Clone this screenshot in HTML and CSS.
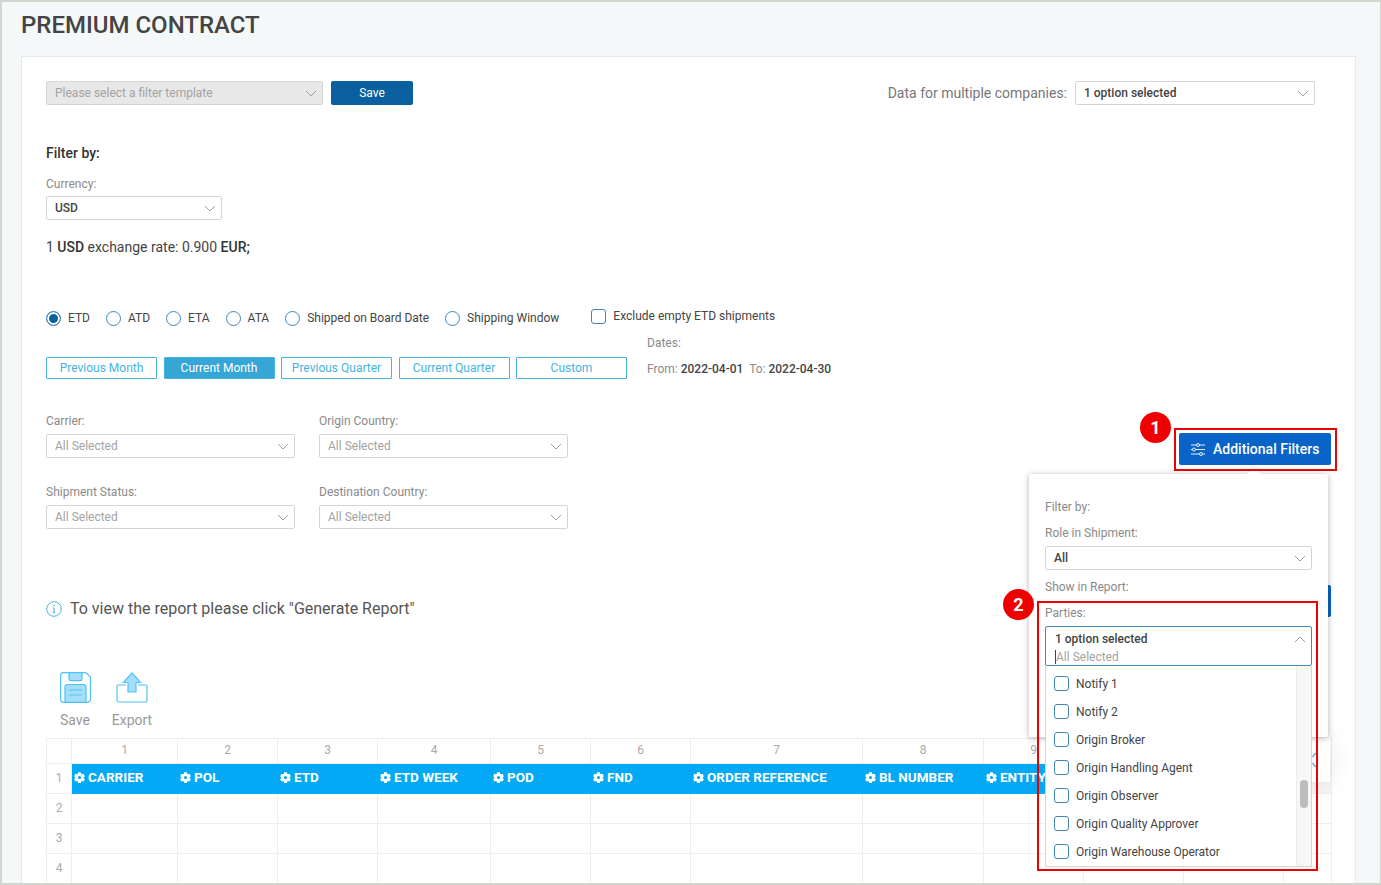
FILE: index.html
```html
<!DOCTYPE html>
<html lang="en">
<head>
    <meta charset="UTF-8">
    <meta name="viewport" content="width=device-width, initial-scale=1.0">
    <title>Premium Contract</title>
    <link rel="stylesheet" href="styles.css">
</head>
<body>
    <svg class="sprites" width="0" height="0">
        <symbol id="chev" viewBox="0 0 12 7"><path d="M1 1l5 5 5-5" fill="none" stroke="currentColor" stroke-width="1"/></symbol>
        <symbol id="cog" viewBox="0 0 24 24"><path fill-rule="evenodd" fill="currentColor" d="M9 .5h6l.7 3.500 1.700 1 3.400-1.200 3 5.200-2.700 2.300v2l2.700 2.300-3 5.200-3.400-1.200-1.700 1-.7 3.500H9l-.7-3.500-1.700-1-3.400 1.200-3-5.200 2.700-2.300v-2L.2 9l3-5.200L6.600 5l1.700-1zM12 8.500a3.500 3.500 0 1 0 0 7 3.500 3.500 0 0 0 0-7z"/></symbol>
    </svg>

    <div class="page">
        <h1>PREMIUM CONTRACT</h1>

        <div class="card">
            <div class="top-row">
                <div class="template-group">
                    <div class="select select-disabled template-select">Please select a filter template<svg class="chev"><use href="#chev"/></svg></div>
                    <button class="btn-save">Save</button>
                </div>
                <div class="company-group">
                    <span class="company-label">Data for multiple companies:</span>
                    <div class="select select-value company-select">1 option selected<svg class="chev"><use href="#chev"/></svg></div>
                </div>
            </div>

            <div class="filter-title">Filter by:</div>
            <label class="field-label">Currency:</label>
            <div class="select select-value currency-select">USD<svg class="chev"><use href="#chev"/></svg></div>
            <p class="rate">1 <b>USD</b> exchange rate: 0.900 <b>EUR;</b></p>

            <div class="date-types">
                <span class="radio-item"><i class="radio radio-on"></i>ETD</span>
                <span class="radio-item"><i class="radio"></i>ATD</span>
                <span class="radio-item"><i class="radio"></i>ETA</span>
                <span class="radio-item"><i class="radio"></i>ATA</span>
                <span class="radio-item"><i class="radio"></i>Shipped on Board Date</span>
                <span class="radio-item"><i class="radio"></i>Shipping Window</span>
                <span class="check-item"><i class="check"></i>Exclude empty ETD shipments</span>
            </div>

            <div class="range-row">
                <div class="range-btns">
                    <button class="range-btn">Previous Month</button>
                    <button class="range-btn active">Current Month</button>
                    <button class="range-btn">Previous Quarter</button>
                    <button class="range-btn">Current Quarter</button>
                    <button class="range-btn">Custom</button>
                </div>
                <div class="dates">
                    <div>Dates:</div>
                    <div class="dates-values">From: <b>2022-04-01</b>&nbsp; To: <b>2022-04-30</b></div>
                </div>
            </div>

            <div class="filters-row">
                <div class="filters-grid">
                    <div>
                        <label class="field-label">Carrier:</label>
                        <div class="select select-muted">All Selected<svg class="chev"><use href="#chev"/></svg></div>
                    </div>
                    <div>
                        <label class="field-label">Origin Country:</label>
                        <div class="select select-muted">All Selected<svg class="chev"><use href="#chev"/></svg></div>
                    </div>
                    <div>
                        <label class="field-label">Shipment Status:</label>
                        <div class="select select-muted">All Selected<svg class="chev"><use href="#chev"/></svg></div>
                    </div>
                    <div>
                        <label class="field-label">Destination Country:</label>
                        <div class="select select-muted">All Selected<svg class="chev"><use href="#chev"/></svg></div>
                    </div>
                </div>
                <button class="btn-additional">
                    <svg class="sliders" viewBox="0 0 14 13" fill="none" stroke="currentColor" stroke-width="0.9">
                        <path d="M0 2h5.500M8.500 2H14M0 6.500h1.500M4.500 6.500H14M0 11h8.500M11.500 11H14"/>
                        <circle cx="7" cy="2" r="1.500"/><circle cx="3" cy="6.500" r="1.500"/><circle cx="10" cy="11" r="1.500"/>
                    </svg>
                    Additional Filters
                </button>
            </div>

            <div class="info-row">
                <div class="info">
                    <svg class="info-icon" viewBox="0 0 16 16" fill="none" stroke="#4cb4e0">
                        <circle cx="8" cy="8" r="7.300"/>
                        <path d="M8 7v4.500M6.800 7H8M6.800 11.500h2.400"/>
                        <circle cx="8" cy="4.600" r="0.500"/>
                    </svg>
                    To view the report please click "Generate Report"
                </div>
                <button class="btn-generate">Generate Report</button>
            </div>

            <div class="tools">
                <div class="tool tool-save">
                    <svg width="31" height="31" viewBox="0 0 31 31" stroke="#4cc4f8" stroke-width="1.200">
                        <path fill="#fff" d="M3.500.6h22.500l4.400 4.400v22a3.400 3.400 0 0 1-3.400 3.400H3.500A3 3 0 0 1 .6 27.500v-24A3 3 0 0 1 3.500.6z"/>
                        <path fill="#a5defa" d="M9 .6h13v6.500a1.500 1.500 0 0 1-1.500 1.500h-10A1.500 1.500 0 0 1 9 7.100z"/>
                        <path fill="#a5defa" d="M5 30.400V15a2.500 2.500 0 0 1 2.500-2.500h16A2.500 2.500 0 0 1 26 15v15.400z"/>
                        <path fill="none" d="M9 18h13M9 23h13"/>
                    </svg>
                    <span>Save</span>
                </div>
                <div class="tool">
                    <svg width="32" height="31" viewBox="0 0 32 31" stroke="#4cc4f8" stroke-width="1.200">
                        <path fill="none" d="M10 13H2.500A1.500 1.500 0 0 0 1 14.500v14A1.500 1.500 0 0 0 2.500 30h27a1.500 1.500 0 0 0 1.500-1.500v-14a1.500 1.500 0 0 0-1.500-1.500H22"/>
                        <path fill="#a5defa" d="M16 .8l8.500 9.700H20V20h-8v-9.500H7.500z"/>
                    </svg>
                    <span>Export</span>
                </div>
            </div>

            <table class="sheet">
                <colgroup>
                    <col class="c-head"><col class="c1"><col class="c2"><col class="c2"><col class="c4"><col class="c2"><col class="c2"><col class="c7"><col class="c8"><col class="c2"><col class="c2"><col class="c2"><col class="c-last">
                </colgroup>
                <tr class="num-row">
                    <td></td><td>1</td><td>2</td><td>3</td><td>4</td><td>5</td><td>6</td><td>7</td><td>8</td><td>9</td><td></td><td></td><td></td>
                </tr>
                <tr class="head-row">
                    <td class="row-num">1</td>
                    <th><svg class="cog"><use href="#cog"/></svg>CARRIER</th>
                    <th><svg class="cog"><use href="#cog"/></svg>POL</th>
                    <th><svg class="cog"><use href="#cog"/></svg>ETD</th>
                    <th><svg class="cog"><use href="#cog"/></svg>ETD WEEK</th>
                    <th><svg class="cog"><use href="#cog"/></svg>POD</th>
                    <th><svg class="cog"><use href="#cog"/></svg>FND</th>
                    <th><svg class="cog"><use href="#cog"/></svg>ORDER REFERENCE</th>
                    <th><svg class="cog"><use href="#cog"/></svg>BL NUMBER</th>
                    <th><svg class="cog"><use href="#cog"/></svg>ENTITY</th>
                    <th></th><th></th><th class="th-end"></th>
                </tr>
                <tr><td class="row-num">2</td><td></td><td></td><td></td><td></td><td></td><td></td><td></td><td></td><td></td><td></td><td></td><td></td></tr>
                <tr><td class="row-num">3</td><td></td><td></td><td></td><td></td><td></td><td></td><td></td><td></td><td></td><td></td><td></td><td></td></tr>
                <tr><td class="row-num">4</td><td></td><td></td><td></td><td></td><td></td><td></td><td></td><td></td><td></td><td></td><td></td><td></td></tr>
            </table>
        </div>

        <!-- floating tab behind the popover, only its edge shows -->
        <div class="float-tab">
            <svg width="6" height="16" viewBox="0 0 6 16" fill="none" stroke="#35b4f0" stroke-width="1.300"><path d="M5 1L1.500 5M1.500 11L5 15"/></svg>
        </div>

        <!-- popover opened from Additional Filters -->
        <div class="popover">
            <div class="pop-label pop-first">Filter by:</div>
            <div class="pop-label">Role in Shipment:</div>
            <div class="select select-value">All<svg class="chev"><use href="#chev"/></svg></div>
            <div class="pop-label pop-show">Show in Report:</div>
            <div class="pop-label pop-parties">Parties:</div>
            <div class="parties-box">
                <div class="parties-value">1 option selected<svg class="chev chev-up"><use href="#chev"/></svg></div>
                <div class="parties-search">All Selected</div>
            </div>
            <div class="parties-list">
                <ul>
                    <li><i class="check"></i>Notify 1</li>
                    <li><i class="check"></i>Notify 2</li>
                    <li><i class="check"></i>Origin Broker</li>
                    <li><i class="check"></i>Origin Handling Agent</li>
                    <li><i class="check"></i>Origin Observer</li>
                    <li><i class="check"></i>Origin Quality Approver</li>
                    <li><i class="check"></i>Origin Warehouse Operator</li>
                </ul>
                <div class="scrollbar"><span></span></div>
            </div>
        </div>

        <div class="mark mark-one"></div>
        <div class="mark mark-two"></div>
        <div class="badge badge-one">1</div>
        <div class="badge badge-two">2</div>
    </div>
</body>
</html>
```

FILE: styles.css
```css
* {
    box-sizing: border-box;
    font-family: Roboto, "Liberation Sans", sans-serif;
}

html, body {
    margin: 0;
    height: 100%;
    overflow: hidden;
}

.sprites {
    display: block;
    height: 0;
}

.page {
    position: relative;
    height: 885px;
    overflow: hidden;
    padding: 0 24px 0 19px;
    background: #f4f8f9;
    border-top: 2px solid #d3d6d0;
    border-left: 2px solid #d3d6d0;
    border-right: 1px solid #d3d6d0;
    border-bottom: 2px solid #d3d6d0;
}

h1 {
    margin: 0;
    height: 54px;
    padding-top: 9px;
    font-size: 24px;
    line-height: 28px;
    font-weight: 500;
    color: #444;
}

.card {
    background: white;
    border: 1px solid #e6eaea;
    padding: 24px 24px 0 24px;
    height: 900px;
}

/* selects */
.select {
    position: relative;
    height: 24px;
    line-height: 23px;
    padding: 0 24px 0 8px;
    font-size: 12px;
    background: white;
    border: 1px solid #d5d5d5;
    border-radius: 2px;
    white-space: nowrap;
}

.select-disabled {
    background: #e8e8e8;
    color: #a3a3a3;
}

.select-muted {
    color: #a3a3a3;
}

.select-value {
    color: #444;
    font-weight: 500;
}

.chev {
    position: absolute;
    right: 5px;
    top: 8px;
    width: 12px;
    height: 7px;
    color: #a0a0a0;
}

.chev-up {
    top: 9px;
    right: 5px;
    transform: rotate(180deg);
}

.top-row {
    display: flex;
    justify-content: space-between;
    padding-right: 16px;
}

.template-group, .company-group {
    display: flex;
    align-items: center;
}

.template-select {
    width: 277px;
}

.btn-save {
    width: 82px;
    height: 24px;
    margin-left: 8px;
    background: #0a5f9e;
    color: white;
    border: 0;
    border-radius: 2px;
    font-size: 12px;
}

.company-label {
    font-size: 14px;
    color: #777;
    margin-right: 8px;
}

.company-select {
    width: 240px;
}

.filter-title {
    margin-top: 40px;
    font-size: 14px;
    line-height: 16px;
    font-weight: 500;
    color: #333;
}

.field-label {
    display: block;
    font-size: 12px;
    line-height: 14px;
    color: #8a8a8a;
}

.filter-title + .field-label {
    margin-top: 16px;
}

.currency-select {
    width: 176px;
    margin-top: 5px;
}

.rate {
    margin: 18px 0 0 0;
    font-size: 14px;
    line-height: 18px;
    color: #444;
}

.rate b {
    font-weight: 500;
    color: #333;
}

/* date type radios */
.date-types {
    display: flex;
    align-items: flex-start;
    margin-top: 53px;
    height: 18px;
    font-size: 12px;
    color: #444;
}

.radio-item {
    display: flex;
    align-items: center;
    height: 16px;
    margin-right: 16px;
    margin-top: 1px;
}

.radio {
    width: 15px;
    height: 15px;
    margin-right: 7px;
    border: 1px solid #3f86bd;
    border-radius: 50%;
    background: white;
}

.radio-on {
    background: #0a5f9e;
    box-shadow: inset 0 0 0 2px white;
}

.check-item {
    display: flex;
    align-items: center;
    height: 16px;
    margin-left: 16px;
    margin-top: -1px;
}

.check {
    width: 15px;
    height: 15px;
    margin-right: 7px;
    flex: none;
    border: 1px solid #3f86bd;
    border-radius: 3px;
    background: white;
}

.range-row {
    display: flex;
    margin-top: 9px;
}

.range-btns {
    display: flex;
    gap: 6.5px;
    padding-top: 21px;
}

.range-btn {
    width: 111px;
    height: 22px;
    padding: 0;
    background: white;
    color: #45b4e0;
    border: 1px solid #45b4e0;
    border-radius: 1px;
    font-size: 12px;
}

.range-btn.active {
    background: #36a6d6;
    color: white;
}

.dates {
    margin-left: 20px;
    font-size: 12px;
    color: #8a8a8a;
}

.dates-values {
    margin-top: 12px;
}

.dates b {
    font-weight: 500;
    color: #444;
}

/* carrier etc */
.filters-row {
    display: flex;
    justify-content: space-between;
    margin-top: 35px;
}

.filters-grid {
    display: grid;
    grid-template-columns: 249px 249px;
    column-gap: 24px;
    row-gap: 27px;
}

.filters-grid .select {
    margin-top: 6px;
}

.btn-additional {
    display: flex;
    align-items: center;
    width: 152px;
    height: 32px;
    margin-top: 19px;
    padding: 0 0 0 12px;
    background: #0a63c7;
    color: white;
    border: 0;
    border-radius: 2px;
    font-size: 14px;
    font-weight: 500;
}

.sliders {
    width: 14px;
    height: 13px;
    margin-right: 8px;
}

.info-row {
    display: flex;
    justify-content: space-between;
    align-items: flex-start;
    margin-top: 56px;
    height: 32px;
}

.info {
    display: flex;
    align-items: center;
    margin-top: 15px;
    font-size: 16px;
    line-height: 18px;
    color: #555;
}

.info-icon {
    width: 16px;
    height: 16px;
    margin-right: 8px;
}

.btn-generate {
    width: 152px;
    height: 32px;
    background: #0a63c7;
    color: white;
    border: 0;
    border-radius: 2px;
    font-size: 14px;
}

.tools {
    display: flex;
    margin-top: 55px;
    padding-left: 12px;
}

.tool {
    display: flex;
    flex-direction: column;
    align-items: center;
    width: 60px;
    font-size: 14px;
    line-height: 16px;
    color: #999;
}

.tool-save {
    width: 34px;
    margin-right: 10px;
}

.tool span {
    margin-top: 9px;
}

/* spreadsheet */
.sheet {
    margin-top: 10px;
    width: 1285px;
    table-layout: fixed;
    border-collapse: collapse;
    font-size: 12px;
}

.c-head { width: 25px; }
.c1 { width: 106px; }
.c2 { width: 100px; }
.c4 { width: 113px; }
.c7 { width: 172px; }
.c8 { width: 121px; }
.c-last { width: 48px; }

.sheet td, .sheet th {
    border: 1px solid #eeeeee;
    padding: 0;
    height: 30px;
}

.num-row td {
    height: 25px;
    padding-bottom: 2px;
    text-align: center;
    color: #aaa;
}

.sheet .row-num {
    padding-bottom: 2px;
    text-align: center;
    color: #aaa;
}

.sheet th {
    background: #03a9f4;
    border-color: #03a9f4;
    color: white;
    text-align: left;
    font-size: 13.5px;
    font-weight: 700;
    white-space: nowrap;
    padding: 0 0 3px 2px;
}

.sheet .th-end {
    background: #f5f5f5;
    border-color: #eeeeee;
}

.cog {
    width: 11px;
    height: 11px;
    margin-right: 3px;
    vertical-align: -1px;
    color: white;
}

/* floats over the sheet */
.float-tab {
    position: absolute;
    left: 1290px;
    top: 736px;
    width: 38px;
    height: 44px;
    padding: 14px 0 0 19px;
    background: white;
    box-shadow: 0 0 24px rgba(0,0,0,0.1);
}

.float-tab svg {
    display: block;
}

/* popover over the page */
.popover {
    position: absolute;
    left: 1027px;
    top: 472px;
    width: 299px;
    height: 263px;
    padding: 0 16px;
    background: white;
    border-radius: 2px;
    box-shadow: 0 1px 6px rgba(0,0,0,0.3);
}

.popover::before {
    content: "";
    position: absolute;
    left: 220px;
    top: -5px;
    width: 10px;
    height: 10px;
    background: white;
    transform: rotate(45deg);
    box-shadow: -1px -1px 2px rgba(0,0,0,0.08);
}

.pop-label {
    font-size: 12px;
    line-height: 14px;
    color: #8a8a8a;
}

.pop-first {
    margin-top: 26px;
    margin-bottom: 12px;
}

.popover .select {
    margin-top: 6px;
    width: 267px;
}

.pop-show {
    margin-top: 10px;
}

.pop-parties {
    margin-top: 12px;
}

.parties-box {
    position: relative;
    width: 267px;
    height: 40px;
    margin-top: 6px;
    padding: 3px 8px 0 9px;
    background: white;
    border: 1px solid #4a88b8;
    border-radius: 2px;
    font-size: 12px;
    line-height: 18px;
}

.parties-value {
    font-weight: 500;
    color: #444;
}

.parties-search {
    color: #a3a3a3;
    border-left: 1px solid #444;
    line-height: 14px;
    margin-top: 2px;
}

.parties-list {
    position: relative;
    z-index: 2;
    display: flex;
    width: 267px;
    height: 201px;
    background: white;
    border: 1px solid #d5d5d5;
    border-top: 0;
}

.parties-list ul {
    flex: 1;
    margin: 0;
    padding: 4px 0 0 8px;
    list-style: none;
    font-size: 12px;
    color: #444;
}

.parties-list li {
    display: flex;
    align-items: center;
    height: 28px;
}

.parties-list .check {
    margin-right: 7px;
    margin-top: -2px;
}

.scrollbar {
    position: relative;
    width: 15px;
    background: #f7f7f7;
    border-left: 1px solid #ececec;
}

.scrollbar span {
    position: absolute;
    left: 3px;
    top: 114px;
    width: 8px;
    height: 28px;
    border-radius: 4px;
    background: #bdbdbd;
}

/* annotations drawn on the screenshot */
.mark {
    position: absolute;
    border: 2px solid #ee0000;
}

.mark-one {
    left: 1172px;
    top: 426px;
    width: 163px;
    height: 43px;
}

.mark-two {
    left: 1035px;
    top: 599px;
    width: 281px;
    height: 270px;
    z-index: 3;
}

.badge {
    position: absolute;
    z-index: 4;
    width: 31px;
    height: 31px;
    border-radius: 50%;
    background: #ee0000;
    color: white;
    text-align: center;
    font-size: 18px;
    font-weight: 700;
    line-height: 31px;
}

.badge-one {
    left: 1138px;
    top: 410px;
}

.badge-two {
    left: 1001px;
    top: 587px;
}
```
